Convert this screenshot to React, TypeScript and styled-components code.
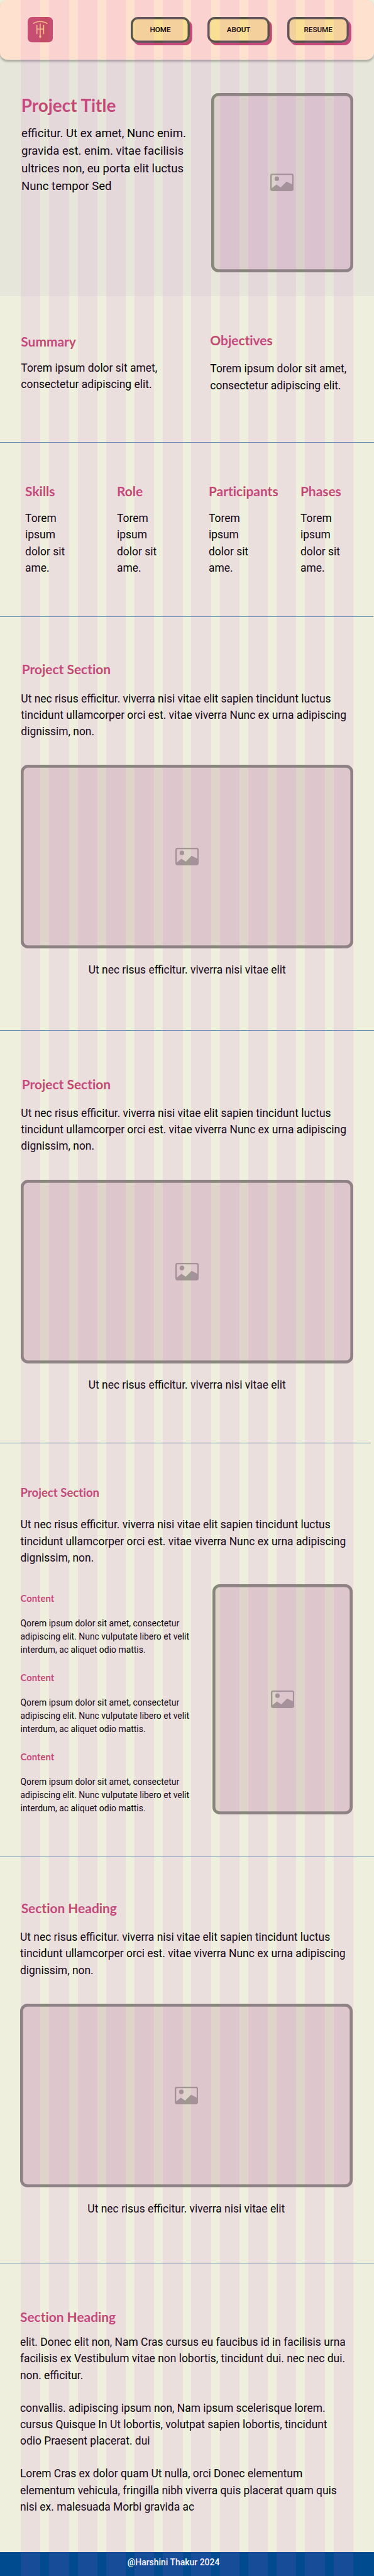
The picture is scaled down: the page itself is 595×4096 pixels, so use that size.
import React from "react";
import styled, { createGlobalStyle } from "styled-components";

/* Design units (1024 wide artboard) to page pixels. */
const u = (n: number) => `${((n * 595) / 1024).toFixed(3)}px`;

const colors = {
  page: "#EEEFDD",
  hero: "#E6E7DA",
  header: "#FEE1CF",
  pink: "#C34870",
  logo: "#C44D66",
  gold: "#FAC483",
  button: "#F8DF94",
  buttonBorder: "#54544C",
  frame: "#87877B",
  icon: "#9F9890",
  line: "#6590B0",
  footer: "#004B8F",
  text: "#000000",
};

const GlobalStyle = createGlobalStyle`
  *, *::before, *::after { box-sizing: border-box; }
  body { margin: 0; background: ${colors.page}; }
  h1, h2, h3, p, figure { margin: 0; }
`;

const Page = styled.div`
  position: relative;
  width: 595px;
  height: 4096px;
  overflow: hidden;
  display: flex;
  flex-direction: column;
  background: ${colors.page};
  color: ${colors.text};
  font-family: Roboto, "Liberation Sans", sans-serif;
`;

const GridOverlay = styled.div`
  position: absolute;
  inset: 0;
  z-index: 5;
  padding: 0 ${u(57)};
  display: grid;
  grid-template-columns: repeat(12, 1fr);
  column-gap: ${u(24)};
  pointer-events: none;
`;

const GridColumn = styled.div`
  background: rgba(217, 90, 240, 0.1);
`;

const HeaderBand = styled.div`
  background: linear-gradient(${colors.page} 50%, ${colors.hero} 50%);
`;

const Header = styled.header`
  position: relative;
  z-index: 1;
  height: ${u(164)};
  padding: ${u(47)} ${u(69)} 0 ${u(75)};
  display: flex;
  justify-content: space-between;
  align-items: flex-start;
  background: ${colors.header};
  border-radius: ${u(20)};
  box-shadow: 0 ${u(4)} ${u(6)} rgba(0, 0, 0, 0.27);
`;

const LogoSvg = styled.svg`
  display: block;
  width: ${u(69)};
  height: ${u(69.5)};
`;

const Nav = styled.nav`
  display: flex;
  gap: ${u(49.3)};
`;

const NavButton = styled.a<{ $w: number }>`
  width: ${p => u(p.$w)};
  height: ${u(70)};
  display: flex;
  align-items: center;
  justify-content: center;
  border-radius: ${u(20)};
  background: ${colors.button};
  box-shadow:
    inset 0 0 0 ${u(6)} ${colors.buttonBorder},
    ${u(6.5)} ${u(7)} 0 ${colors.pink};
  color: ${colors.text};
  font-size: ${u(20)};
  font-weight: 500;
  line-height: ${u(24)};
  text-decoration: none;
`;

const Hero = styled.section`
  height: ${u(646)};
  padding: ${u(90)} ${u(57)} 0 ${u(58)};
  display: flex;
  justify-content: space-between;
  background: ${colors.hero};
`;

const HeroCopy = styled.div`
  padding-top: ${u(4.6)};
  display: flex;
  flex-direction: column;
  gap: ${u(24.4)};
`;

const Title = styled.h1`
  font: 700 ${u(48)} / ${u(60)} Lato, "Noto Sans", sans-serif;
  font-variant-ligatures: none;
  color: ${colors.pink};
`;

const Lead = styled.p`
  padding-left: ${u(0.5)};
  font-size: ${u(32)};
  line-height: ${u(48)};
  white-space: pre;
`;

const Section = styled.section<{ $h: number; $top: number; $left?: number }>`
  height: ${p => u(p.$h)};
  padding: ${p => u(p.$top)} 0 0 ${p => u(p.$left ?? 57.4)};
  display: flex;
  flex-direction: column;
`;

const Rule = styled.hr<{ $inset?: number }>`
  flex: none;
  height: 1px;
  margin: -1px ${p => u(p.$inset ?? 0)} 0 0;
  border: 0;
  background: ${colors.line};
`;

const Heading = styled.h2<{ $indent?: number; $size?: number }>`
  padding-left: ${p => u(p.$indent ?? 0)};
  font: 700 ${p => u(p.$size ?? 36)} / ${u(45)} Lato, "Noto Sans", sans-serif;
  font-variant-ligatures: none;
  color: ${colors.pink};
  white-space: nowrap;
`;

const Body = styled.p<{ $gap: number }>`
  margin-top: ${p => u(p.$gap)};
  font-size: ${u(30)};
  line-height: ${u(45)};
  white-space: pre;
`;

const PairGrid = styled.div`
  display: grid;
  grid-template-columns: ${u(518)} 1fr;
`;

const PairItem = styled.div<{ $top?: number }>`
  padding-top: ${p => u(p.$top ?? 0)};
`;

const FactGrid = styled.div`
  display: grid;
  grid-template-columns: repeat(4, ${u(251.2)});
`;

const Figure = styled.figure<{ $gap: number }>`
  width: ${u(910)};
  margin-top: ${p => u(p.$gap)};
`;

const Caption = styled.figcaption`
  margin-top: ${u(36)};
  font-size: ${u(30)};
  line-height: ${u(45)};
  text-align: center;
`;

const Frame = styled.div<{ $w: number; $h: number; $tint?: string }>`
  flex: none;
  width: ${p => u(p.$w)};
  height: ${p => u(p.$h)};
  display: flex;
  align-items: center;
  justify-content: center;
  border-radius: ${u(20)};
  background: ${p => p.$tint ?? "#DED4CA"};
  box-shadow: inset 0 0 0 ${u(8)} ${colors.frame};
`;

const ImageSvg = styled.svg`
  display: block;
  width: ${u(64)};
  height: ${u(48)};
`;

const Split = styled.div`
  width: ${u(909)};
  margin-top: ${u(50.7)};
  display: flex;
  justify-content: space-between;
  align-items: flex-start;
`;

const ContentList = styled.div`
  padding-top: ${u(20)};
  display: flex;
  flex-direction: column;
  gap: ${u(40)};
`;

const ContentHeading = styled.h3`
  font: 700 ${u(25.6)} / ${u(36)} Lato, "Noto Sans", sans-serif;
  font-variant-ligatures: none;
  color: ${colors.pink};
`;

const ContentText = styled.p`
  margin-top: ${u(33)};
  font-size: ${u(24)};
  line-height: ${u(36)};
  white-space: pre;
`;

const Footer = styled.footer`
  flex: 1;
  padding: ${u(14)} 0 0 ${u(349)};
  background: ${colors.footer};
  color: #fff;
  font-size: ${u(24)};
  font-weight: 500;
  line-height: ${u(29)};
`;

const Logo = () => (
  <LogoSvg viewBox="0 0 69 69.5">
    <rect width="69" height="69.5" rx="12" fill={colors.logo} />
    <g fill="none" stroke={colors.gold} strokeWidth="2.8">
      <path d="M15 18.4C25 10.6 43.5 10.6 54 18.4" />
      <path d="M25.3 22V46.7M43.7 22V46.7M25.3 33.2H43.7" />
      <path d="M34.3 18V54" />
    </g>
    <path d="M34.3 49L37.8 53.3L34.3 58.5L30.8 53.3Z" fill={colors.gold} />
  </LogoSvg>
);

const ImageIcon = () => (
  <ImageSvg viewBox="0 0 64 48">
    <rect x="2" y="2" width="60" height="44" rx="4" fill="none" stroke={colors.icon} strokeWidth="4" />
    <circle cx="18" cy="14" r="6.2" fill={colors.icon} />
    <path
      d="M3 41L16.5 30L28.5 38L44.5 22L61 30V43Q61 46 58 46H6Q3 46 3 43Z"
      fill={colors.icon}
    />
  </ImageSvg>
);

const projectText =
  "Ut nec risus efficitur. viverra nisi vitae elit sapien tincidunt luctus\ntincidunt ullamcorper orci est. vitae viverra Nunc ex urna adipiscing\ndignissim, non.";
const captionText = "Ut nec risus efficitur. viverra nisi vitae elit";
const shortText = "Torem ipsum dolor sit amet,\nconsectetur adipiscing elit.";
const factText = "Torem\nipsum\ndolor sit\name.";
const contentText =
  "Qorem ipsum dolor sit amet, consectetur\nadipiscing elit. Nunc vulputate libero et velit\ninterdum, ac aliquet odio mattis.";
const closingText = `elit. Donec elit non, Nam Cras cursus eu faucibus id in facilisis urna
facilisis ex Vestibulum vitae non lobortis, tincidunt dui. nec nec dui.
non. efficitur.

convallis. adipiscing ipsum non, Nam ipsum scelerisque lorem.
cursus Quisque In Ut lobortis, volutpat sapien lobortis, tincidunt
odio Praesent placerat. dui

Lorem Cras ex dolor quam Ut nulla, orci Donec elementum
elementum vehicula, fringilla nibh viverra quis placerat quam quis
nisi ex. malesuada Morbi gravida ac`;

const FigureBlock = ({ h }: { h: number }) => (
  <Figure $gap={69}>
    <Frame $w={910} $h={h}>
      <ImageIcon />
    </Frame>
    <Caption>{captionText}</Caption>
  </Figure>
);

export default function App() {
  return (
    <Page>
      <GlobalStyle />
      <HeaderBand>
        <Header>
          <Logo />
          <Nav>
            <NavButton $w={161}>HOME</NavButton>
            <NavButton $w={169}>ABOUT</NavButton>
            <NavButton $w={168}>RESUME</NavButton>
          </Nav>
        </Header>
      </HeaderBand>

      <Hero>
        <HeroCopy>
          <Title>Project Title</Title>
          <Lead>
            {"efficitur. Ut ex amet, Nunc enim.\ngravida est. enim. vitae facilisis\nultrices non, eu porta elit luctus\nNunc tempor Sed"}
          </Lead>
        </HeroCopy>
        <Frame $w={389} $h={491} $tint="#DBD0CB">
          <ImageIcon />
        </Frame>
      </Hero>

      <Section $h={402} $top={99.5}>
        <PairGrid>
          <PairItem $top={3}>
            <Heading>Summary</Heading>
            <Body $gap={26.5}>{shortText}</Body>
          </PairItem>
          <PairItem>
            <Heading>Objectives</Heading>
            <Body $gap={32.5}>{shortText}</Body>
          </PairItem>
        </PairGrid>
      </Section>
      <Rule />

      <Section $h={475.5} $top={109} $left={69}>
        <FactGrid>
          {["Skills", "Role", "Participants", "Phases"].map(name => (
            <div key={name}>
              <Heading>{name}</Heading>
              <Body $gap={30.3}>{factText}</Body>
            </div>
          ))}
        </FactGrid>
      </Section>
      <Rule $inset={2} />

      <Section $h={1134} $top={122}>
        <Heading $indent={2.5}>Project Section</Heading>
        <Body $gap={34.5}>{projectText}</Body>
        <FigureBlock h={502.5} />
      </Section>
      <Rule />

      <Section $h={1129} $top={123.5}>
        <Heading $indent={2.5}>Project Section</Heading>
        <Body $gap={34.2}>{projectText}</Body>
        <FigureBlock h={502.5} />
      </Section>
      <Rule $inset={8} />

      <Section $h={1131.5} $top={112} $left={56}>
        <Heading $size={32}>Project Section</Heading>
        <Body $gap={42.7}>{projectText}</Body>
        <Split>
          <ContentList>
            {[0, 1, 2].map(i => (
              <div key={i}>
                <ContentHeading>Content</ContentHeading>
                <ContentText>{contentText}</ContentText>
              </div>
            ))}
          </ContentList>
          <Frame $w={383.5} $h={630}>
            <ImageIcon />
          </Frame>
        </Split>
      </Section>
      <Rule />

      <Section $h={1111.5} $top={117.5} $left={55}>
        <Heading $indent={3}>Section Heading</Heading>
        <Body $gap={34.5}>{projectText}</Body>
        <FigureBlock h={502.5} />
      </Section>
      <Rule />

      <Section $h={790.5} $top={124.5} $left={55}>
        <Heading>Section Heading</Heading>
        <Body $gap={24.3}>{closingText}</Body>
      </Section>

      <Footer>@Harshini Thakur 2024</Footer>

      <GridOverlay aria-hidden>
        {Array.from({ length: 12 }, (_, i) => (
          <GridColumn key={i} />
        ))}
      </GridOverlay>
    </Page>
  );
}
